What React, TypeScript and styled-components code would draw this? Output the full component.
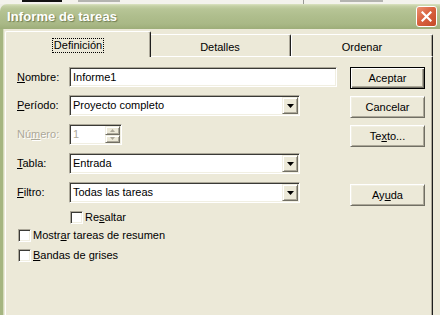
import React from "react";
import styled, { createGlobalStyle, css } from "styled-components";

const GlobalStyle = createGlobalStyle`
  html, body { margin: 0; padding: 0; background: #eeede6; }
  body { font-family: "Liberation Sans", Arial, sans-serif; font-size: 11px; color: #000; }
  * { box-sizing: border-box; }
`;

const sunken = css`
  border: 1px solid;
  border-color: #aca899 #fff #fff #aca899;
  box-shadow: inset 1px 1px #3a3a36, inset -1px -1px #f1efe2;
`;

const raised = css`
  border: 1px solid;
  border-color: #f1efe2 #716f64 #716f64 #f1efe2;
  box-shadow: inset 1px 1px #fff, inset -1px -1px #aca899;
  background: #ece9d8;
`;

const Screen = styled.div`
  width: 440px;
  height: 315px;
  overflow: hidden;
  background: #eeede6;
  display: flex;
  flex-direction: column;
`;

const Backdrop = styled.div`
  height: 4px;
  flex: none;
  display: flex;
  align-items: flex-start;
  background: #f3f2ec;
`;

const BackBlock = styled.div<{ $left: number; $width: number; $h: number; $color: string }>`
  margin-left: ${(p) => p.$left}px;
  width: ${(p) => p.$width}px;
  height: ${(p) => p.$h}px;
  background: ${(p) => p.$color};
  flex: none;
`;

const Window = styled.div`
  flex: 1;
  display: flex;
  flex-direction: column;
  min-height: 0;
`;

const TitleBar = styled.div`
  height: 25px;
  flex: none;
  border-radius: 7px 0 0 0;
  background: linear-gradient(
    to bottom,
    #dbe3c2 0px,
    #c5d0a6 2px,
    #b7c596 5px,
    #afbe8d 12px,
    #a9b886 20px,
    #9dad79 25px
  );
  display: flex;
  align-items: center;
  justify-content: space-between;
  padding: 0 3px 0 7px;
`;

const Title = styled.span`
  font-family: "Liberation Sans", Arial, sans-serif;
  font-weight: bold;
  font-size: 13px;
  color: #fff;
  text-shadow: 1px 1px 1px #6f7d52;
  letter-spacing: 0.1px;
`;

const CloseButton = styled.div`
  width: 21px;
  height: 21px;
  border: 1px solid #fff;
  border-radius: 3px;
  background: linear-gradient(135deg, #ec9272 0%, #d9623f 45%, #c44a28 100%);
  display: flex;
  align-items: center;
  justify-content: center;
`;

const WindowBody = styled.div`
  flex: 1;
  display: flex;
  flex-direction: column;
  background: #ece9d8;
  border-left: 3px solid #a5b581;
  box-shadow: inset 1px 0 #d3dab9;
  padding: 2px 0 0 2px;
`;

const TabStrip = styled.div`
  height: 25px;
  flex: none;
  display: flex;
  align-items: flex-end;
  padding-left: 2px;
  position: relative;
  z-index: 2;
`;

const Tab = styled.div<{ $selected?: boolean }>`
  width: ${(p) => (p.$selected ? 146 : 142)}px;
  height: ${(p) => (p.$selected ? 26 : 22)}px;
  margin: ${(p) => (p.$selected ? "0 -2px -1px -2px" : "0")};
  position: relative;
  z-index: ${(p) => (p.$selected ? 2 : 1)};
  flex: none;
  background: #ece9d8;
  border-top: 1px solid #fff;
  border-left: 1px solid #fff;
  border-right: 1px solid #1e1e1e;
  box-shadow: inset -1px 0 #aca899;
  border-radius: 2px 2px 0 0;
  display: flex;
  justify-content: center;
  align-items: flex-start;
  padding-top: ${(p) => (p.$selected ? 7 : 6)}px;
  line-height: 13px;
`;

const FocusLabel = styled.span`
  outline: 1px dotted #000;
  padding: 0 1px;
  line-height: 13px;
`;

const Panel = styled.div`
  width: 428px;
  height: 262px;
  flex: none;
  border-top: 1px solid #fff;
  border-left: 1px solid #fff;
  border-right: 1px solid #1e1e1e;
  box-shadow: inset -1px 0 #aca899;
  padding: 10px 7px 0 11px;
  display: flex;
  align-items: flex-start;
  gap: 13px;
`;

const Form = styled.div`
  width: 320px;
  display: flex;
  flex-direction: column;
`;

const FieldGrid = styled.div`
  display: grid;
  grid-template-columns: 52px 268px;
  row-gap: 8px;
  align-items: center;
`;

const Label = styled.span<{ $disabled?: boolean }>`
  line-height: 13px;
  white-space: nowrap;
  color: ${(p) => (p.$disabled ? "#aca899" : "#000")};
  text-shadow: ${(p) => (p.$disabled ? "1px 1px #fff" : "none")};
`;

const TextBox = styled.div`
  ${sunken};
  width: 268px;
  height: 20px;
  background: #fff;
  display: flex;
  align-items: center;
  padding: 0 3px;
  line-height: 13px;
`;

const Select = styled.div`
  ${sunken};
  width: 231px;
  height: 21px;
  background: #fff;
  display: flex;
  align-items: stretch;
`;

const SelectValue = styled.span`
  flex: 1;
  display: flex;
  align-items: center;
  padding-left: 3px;
  line-height: 13px;
`;

const ArrowButton = styled.div`
  ${raised};
  width: 16px;
  margin: 1px 1px 1px 0;
  display: flex;
  align-items: center;
  justify-content: center;
`;

const Spinner = styled.div`
  ${sunken};
  width: 53px;
  height: 21px;
  background: #fff;
  display: flex;
  align-items: stretch;
`;

const SpinValue = styled.span`
  flex: 1;
  display: flex;
  align-items: center;
  padding-left: 3px;
  color: #aca899;
  line-height: 13px;
`;

const SpinButtons = styled.div`
  width: 15px;
  margin: 1px 1px 1px 0;
  display: flex;
  flex-direction: column;
`;

const SpinButton = styled.div`
  ${raised};
  flex: 1;
  display: flex;
  align-items: center;
  justify-content: center;
`;

const CheckRow = styled.label<{ $indent: number; $top: number }>`
  display: flex;
  align-items: center;
  gap: 2px;
  margin-left: ${(p) => p.$indent}px;
  margin-top: ${(p) => p.$top}px;
  height: 13px;
  line-height: 13px;
  white-space: nowrap;
`;

const CheckBox = styled.span`
  ${sunken};
  width: 13px;
  height: 13px;
  flex: none;
  background: #fff;
`;

const ButtonColumn = styled.div`
  width: 75px;
  display: flex;
  flex-direction: column;
  gap: 7px;
`;

const PushButton = styled.div<{ $default?: boolean; $mt?: number }>`
  width: 75px;
  height: 22px;
  margin-top: ${(p) => p.$mt ?? 0}px;
  background: #ece9d8;
  display: flex;
  align-items: center;
  justify-content: center;
  line-height: 13px;
  ${(p) =>
    p.$default
      ? css`
          border: 1px solid #000;
          box-shadow: inset 1px 1px #fff, inset -1px -1px #716f64, inset -2px -2px #aca899;
        `
      : css`
          border: 1px solid;
          border-color: #fff #716f64 #716f64 #fff;
          box-shadow: inset 1px 1px #f1efe2, inset -1px -1px #aca899;
        `}
`;

const DownArrow = ({ color = "#000" }: { color?: string }) => (
  <svg width="7" height="4" viewBox="0 0 7 4">
    <polygon points="0,0 7,0 3.5,4" fill={color} />
  </svg>
);

const SmallArrow = ({ up }: { up?: boolean }) => (
  <svg width="5" height="3" viewBox="0 0 5 3">
    <polygon points={up ? "0,3 5,3 2.5,0" : "0,0 5,0 2.5,3"} fill="#aca899" />
  </svg>
);

const DropDown = ({ value }: { value: string }) => (
  <Select>
    <SelectValue>{value}</SelectValue>
    <ArrowButton>
      <DownArrow />
    </ArrowButton>
  </Select>
);

export default function App() {
  return (
    <>
      <GlobalStyle />
      <Screen>
        <Backdrop>
          <BackBlock $left={22} $width={40} $h={2} $color="#111" />
          <BackBlock $left={16} $width={42} $h={2} $color="#b4b4b0" />
          <BackBlock $left={183} $width={1} $h={4} $color="#9a9a96" />
          <BackBlock $left={36} $width={43} $h={2} $color="#b4b4b0" />
        </Backdrop>
        <Window>
          <TitleBar>
            <Title>Informe de tareas</Title>
            <CloseButton>
              <svg width="11" height="11" viewBox="0 0 11 11">
                <path d="M1.5 1.5 L9.5 9.5 M9.5 1.5 L1.5 9.5" stroke="#fff" strokeWidth="2.2" strokeLinecap="square" />
              </svg>
            </CloseButton>
          </TitleBar>
          <WindowBody>
            <TabStrip>
              <Tab $selected>
                <FocusLabel>Definición</FocusLabel>
              </Tab>
              <Tab>Detalles</Tab>
              <Tab>Ordenar</Tab>
            </TabStrip>
            <Panel>
              <Form>
                <FieldGrid>
                  <Label>
                    <u>N</u>ombre:
                  </Label>
                  <TextBox>Informe1</TextBox>
                  <Label>
                    <u>P</u>eríodo:
                  </Label>
                  <DropDown value="Proyecto completo" />
                  <Label $disabled>
                    Nú<u>m</u>ero:
                  </Label>
                  <Spinner>
                    <SpinValue>1</SpinValue>
                    <SpinButtons>
                      <SpinButton>
                        <SmallArrow up />
                      </SpinButton>
                      <SpinButton>
                        <SmallArrow />
                      </SpinButton>
                    </SpinButtons>
                  </Spinner>
                  <Label>
                    <u>T</u>abla:
                  </Label>
                  <DropDown value="Entrada" />
                  <Label>
                    <u>F</u>iltro:
                  </Label>
                  <DropDown value="Todas las tareas" />
                </FieldGrid>
                <CheckRow $indent={53} $top={8}>
                  <CheckBox />
                  <span>
                    Re<u>s</u>altar
                  </span>
                </CheckRow>
                <CheckRow $indent={1} $top={5}>
                  <CheckBox />
                  <span>
                    Mostr<u>a</u>r tareas de resumen
                  </span>
                </CheckRow>
                <CheckRow $indent={1} $top={7}>
                  <CheckBox />
                  <span>
                    <u>B</u>andas de grises
                  </span>
                </CheckRow>
              </Form>
              <ButtonColumn>
                <PushButton $default>Aceptar</PushButton>
                <PushButton>Cancelar</PushButton>
                <PushButton>
                  Te<u>x</u>to...
                </PushButton>
                <PushButton $mt={30}>
                  Ay<u>u</u>da
                </PushButton>
              </ButtonColumn>
            </Panel>
          </WindowBody>
        </Window>
      </Screen>
    </>
  );
}
